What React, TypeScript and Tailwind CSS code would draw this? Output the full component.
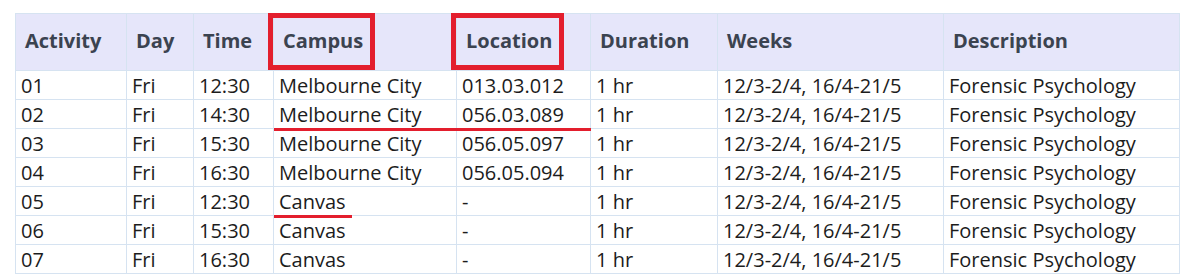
import React from 'react'

interface ClassRow {
  activity: string
  day: string
  time: string
  campus: string
  location: string
  duration: string
  weeks: string
  description: string
  mark?: 'wide' | 'short'
}

const rows: ClassRow[] = [
  { activity: '01', day: 'Fri', time: '12:30', campus: 'Melbourne City', location: '013.03.012', duration: '1 hr', weeks: '12/3-2/4, 16/4-21/5', description: 'Forensic Psychology' },
  { activity: '02', day: 'Fri', time: '14:30', campus: 'Melbourne City', location: '056.03.089', duration: '1 hr', weeks: '12/3-2/4, 16/4-21/5', description: 'Forensic Psychology', mark: 'wide' },
  { activity: '03', day: 'Fri', time: '15:30', campus: 'Melbourne City', location: '056.05.097', duration: '1 hr', weeks: '12/3-2/4, 16/4-21/5', description: 'Forensic Psychology' },
  { activity: '04', day: 'Fri', time: '16:30', campus: 'Melbourne City', location: '056.05.094', duration: '1 hr', weeks: '12/3-2/4, 16/4-21/5', description: 'Forensic Psychology' },
  { activity: '05', day: 'Fri', time: '12:30', campus: 'Canvas', location: '-', duration: '1 hr', weeks: '12/3-2/4, 16/4-21/5', description: 'Forensic Psychology', mark: 'short' },
  { activity: '06', day: 'Fri', time: '15:30', campus: 'Canvas', location: '-', duration: '1 hr', weeks: '12/3-2/4, 16/4-21/5', description: 'Forensic Psychology' },
  { activity: '07', day: 'Fri', time: '16:30', campus: 'Canvas', location: '-', duration: '1 hr', weeks: '12/3-2/4, 16/4-21/5', description: 'Forensic Psychology' }
]

// red box drawn over a header label
const HeadCell = ({ label, boxWidth }: { label: string; boxWidth?: string }): React.ReactNode => (
  <th className="relative border border-[#d6e3f1] px-[9px] pb-[3px] text-left align-middle font-bold text-[#3b4350]">
    {label}
    {boxWidth && (
      <span
        className={`pointer-events-none absolute -left-[6px] -top-px h-[57px] border-[5px] border-[#e31e2d] ${boxWidth}`}
      />
    )}
  </th>
)

const Cell = ({ children }: { children?: React.ReactNode }): React.ReactNode => (
  <td className="relative border border-[#d6e3f1] px-[5px] align-middle">{children}</td>
)

export default function App(): React.ReactNode {
  return (
    <div className="h-[280px] w-[1200px] bg-white pl-[15px] pt-[13px] font-['Open_Sans',sans-serif] text-[20px] leading-[27px] text-[#1c1c1c]">
      <table className="w-[1164px] table-fixed border-collapse">
        <colgroup>
          <col className="w-[111px]" />
          <col className="w-[67px]" />
          <col className="w-[80px]" />
          <col className="w-[183px]" />
          <col className="w-[134px]" />
          <col className="w-[127px]" />
          <col className="w-[226px]" />
          <col className="w-[236px]" />
        </colgroup>
        <thead>
          <tr className="h-[57px] bg-[#e6e6fa]">
            <HeadCell label="Activity" />
            <HeadCell label="Day" />
            <HeadCell label="Time" />
            <HeadCell label="Campus" boxWidth="w-[107px]" />
            <HeadCell label="Location" boxWidth="w-[113px]" />
            <HeadCell label="Duration" />
            <HeadCell label="Weeks" />
            <HeadCell label="Description" />
          </tr>
        </thead>
        <tbody>
          {rows.map((row) => (
            <tr key={row.activity} className="h-[29px]">
              <Cell>{row.activity}</Cell>
              <Cell>{row.day}</Cell>
              <Cell>{row.time}</Cell>
              <Cell>
                {row.campus}
                {row.mark === 'wide' && (
                  <span className="pointer-events-none absolute -bottom-[3px] left-0 z-10 h-[3px] w-[317px] bg-[#e31e2d]" />
                )}
                {row.mark === 'short' && (
                  <span className="pointer-events-none absolute -bottom-[3px] left-0 z-10 h-[3px] w-[78px] bg-[#e31e2d]" />
                )}
              </Cell>
              <Cell>{row.location}</Cell>
              <Cell>{row.duration}</Cell>
              <Cell>{row.weeks}</Cell>
              <Cell>{row.description}</Cell>
            </tr>
          ))}
        </tbody>
      </table>
    </div>
  )
}
